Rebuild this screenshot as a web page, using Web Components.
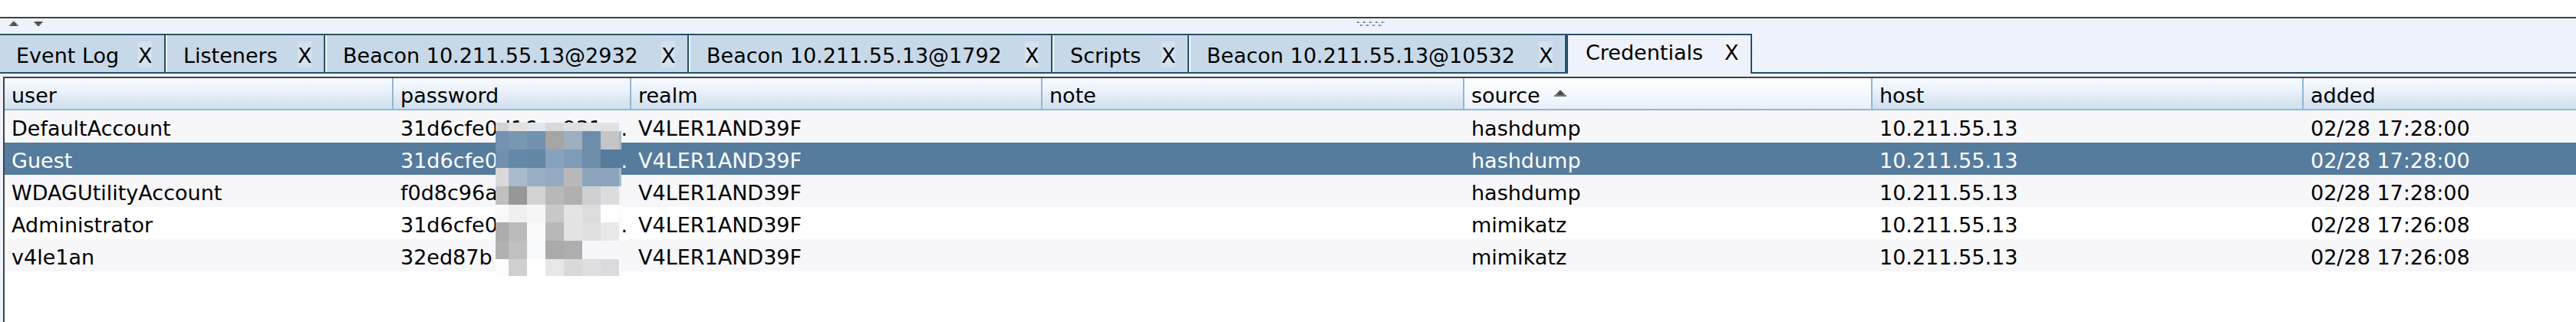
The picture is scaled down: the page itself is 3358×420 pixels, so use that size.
<!DOCTYPE html>
<html lang="en">
<head>
<meta charset="utf-8">
<title>Credentials</title>
<style>
  html, body { margin: 0; height: 100%; }
  body {
    font: 27px/36px "DejaVu Sans", "Noto Sans", sans-serif;
    color: #000;
    background: #fff;
    --panel: #eef2fb;
    --navy: #26506f;
    --edge: #404244;
    --sky: #8fb8d9;
  }
</style>
</head>
<body>
<app-workspace>
  <split-divider></split-divider>
  <tab-strip>
    <tab-item style="--w: 216px">Event Log</tab-item>
    <tab-item style="--w: 208px">Listeners</tab-item>
    <tab-item style="--w: 474px">Beacon 10.211.55.13@2932</tab-item>
    <tab-item style="--w: 474px">Beacon 10.211.55.13@1792</tab-item>
    <tab-item style="--w: 178px">Scripts</tab-item>
    <tab-item style="--w: 492px">Beacon 10.211.55.13@10532</tab-item>
    <tab-item style="--w: 242px" active>Credentials</tab-item>
  </tab-strip>
  <credential-table></credential-table>
</app-workspace>

<script>
const define = (name, html, setup) =>
  customElements.define(name, class extends HTMLElement {
    constructor() {
      super();
      const template = document.createElement('template');
      template.innerHTML = html;
      this.attachShadow({ mode: 'open' }).append(template.content.cloneNode(true));
    }
  });

define('app-workspace', `
  <style>
    :host { display: flex; flex-direction: column; min-height: 100vh; box-sizing: border-box; padding-top: 22px; overflow: hidden; }
    main { flex: 1; display: flex; flex-direction: column; border-top: 2px solid var(--edge); background: var(--panel); }
  </style>
  <main><slot></slot></main>`);

define('split-divider', `
  <style>
    :host { display: grid; grid-template-columns: 36px 1fr; align-items: start; height: 16px; padding: 4px 0 0 8px; }
    .arrows { display: flex; gap: 20px; padding-left: 4px; }
    button { flex: none; width: 12px; height: 6px; padding: 0; border: 0; background: none; display: block; }
    svg { display: block; flex: none; }
    .grip { justify-self: center; padding-left: 172px; }
  </style>
  <div class="arrows">
    <button aria-label="Collapse up"><svg width="12" height="6" fill="#505254"><path d="M4 0h4v2h2v2h2v2H0V4h2V2h2z" fill="#8b8d91"/><path d="M5 0h2v2h2v2h1v2H2V4h1V2h2z"/></svg></button>
    <button aria-label="Collapse down"><svg width="12" height="6" fill="#505254"><path d="M0 0h12v2h-2v2H8v2H4V4H2V2H0z" fill="#8b8d91"/><path d="M2 0h8v2H9v2H7v2H5V4H3V2H2z"/></svg></button>
  </div>
  <div class="grip"><svg width="36" height="6">
    <path d="M0 0h2v2H0zM8 0h2v2H8zM16 0h2v2h-2zM24 0h2v2h-2zM32 0h2v2h-2zM4 4h2v2H4zM12 4h2v2h-2zM20 4h2v2h-2zM28 4h2v2h-2z" fill="#5f8bb2"/>
    <path d="M2 0h2v2H2zM10 0h2v2h-2zM18 0h2v2h-2zM26 0h2v2h-2zM34 0h2v2h-2zM6 4h2v2H6zM14 4h2v2h-2zM22 4h2v2h-2zM30 4h2v2h-2z" fill="#b9c3cf"/>
  </svg></div>`);

define('tab-strip', `
  <style>
    :host { display: flex; height: 52px; }
    .rest { flex: 1; box-sizing: border-box; border-bottom: 2px solid var(--navy); }
  </style>
  <slot></slot><div class="rest"></div>`);

define('tab-item', `
  <style>
    :host {
      display: flex; justify-content: space-between; align-items: flex-start; box-sizing: border-box;
      flex: 0 0 var(--w); height: 52px; padding: 6px 16px 0 23px; background: #c7d9e9;
      border: solid var(--navy); border-width: 2px 2px 2px 0; box-shadow: inset 2px 0 #f1f6fb;
    }
    :host(:first-child) { box-shadow: none; padding-left: 21px; }
    :host([active]) {
      background: var(--panel); padding-top: 2px; border-width: 2px 2px 0 2px; box-shadow: none;
    }
    button { font: inherit; line-height: 42px; color: inherit; border: 0; padding: 0; margin: 0; background: none; white-space: nowrap; }
    .close { box-sizing: border-box; width: 18px; height: 34px; line-height: 30px; padding-top: 4px; margin-top: 2px; background: radial-gradient(#d5e3f2, #d6e1ec); }
    :host([active]) .close { background: #f1f4fa; }
  </style>
  <button role="tab"><slot></slot></button><button class="close">X</button>`);

const columns = [['user', 507], ['password', 310], ['realm', 536], ['note', 550], ['source', 532], ['host', 562], ['added', 0]];
const rows = [
  ['DefaultAccount', '31d6cfe0d16ae931...', 'hashdump', '02/28 17:28:00'],
  ['Guest', '31d6cfe0d16ae931...', 'hashdump', '02/28 17:28:00'],
  ['WDAGUtilityAccount', 'f0d8c96a', 'hashdump', '02/28 17:28:00'],
  ['Administrator', '31d6cfe0d16ae931...', 'mimikatz', '02/28 17:26:08'],
  ['v4le1an', '32ed87b', 'mimikatz', '02/28 17:26:08'],
];

/* Pixelated censor block: column edges, row edges, and one colour per cell. */
const xs = [0, 17, 41, 65, 89, 113, 137, 161, 164];
const ys = [0, 11, 35, 59, 83, 107, 130, 154, 178, 200];
const tones = [
  '#d2d3d5 #e2e2e1 #e1e6ef #d8d9db #dedfe2 #e2e3e7 #e1e1e4 #f7f7fa',
  '#7391b1 #7897b0 #7290b0 #a5a5a5 #9eafc0 #6e8dab #c5c5c7 #a9bace',
  '#7190b0 #6488a7 #6286a3 #87a2bc #7f9bb6 #6e8dab #557b9d #557b9d',
  '#dadada #a9bbcd #99adc5 #95abc3 #b9b9bb #8da4bd #8da3bc #a9bace',
  '#bfbfbf #979797 #d2d2d2 #b8b8b8 #b0b0b0 #cecfd1 #dcdcde #f4f4f7',
  '#f9f9f9 #efefef #f6f6f6 #c8c8c8 #e4e4e4 #dddddd #ffffff #fafafa',
  '#acacac #bababa #fafafa #b8b8b8 #e3e3e3 #e0e0e0 #e9e9e9 #fcfcfc',
  '#b1b1b1 #c0c0c0 #f8f9fc #aaaaaa #aeaeb0 #f7f7fa #f7f7fa #f7f7fa',
  '#fcfcfc #d0d0d0 #ffffff #e7e7e7 #d9d9d9 #dfdfe1 #dbdbdd #fbfbfc',
];
const mosaic = tones.map((line, r) => line.split(' ').map((fill, c) =>
  `<rect x="${xs[c]}" y="${ys[r]}" width="${xs[c + 1] - xs[c]}" height="${ys[r + 1] - ys[r]}" fill="${fill}"/>`).join('')).join('');

const td = (text) => `<td>${text}</td>`;
const secretText = (text) => text.endsWith('...')
  ? `<div class="secret"><span>${text.slice(0, -3)}</span><span>...</span></div>` : text;

define('credential-table', `
  <style>
    :host { display: block; flex: 1; margin: 4px 0 0 4px; border: solid var(--edge); border-width: 2px 0 0 2px; background: #fff; }
    table { width: 100%; table-layout: fixed; border-collapse: separate; border-spacing: 0; }
    th, td { box-sizing: border-box; height: 42px; text-align: left; font-weight: normal; white-space: nowrap; padding: 6px 9px 0; }
    th {
      line-height: 34px;
      border: solid var(--sky); border-width: 0 2px 2px 0;
      background: linear-gradient(#f8fbff, #ebf2fc 40%, #dae6f1 75%, #d0e1f0);
    }
    th:last-child { border-right: 0; }
    th[aria-sort] { background: linear-gradient(#fff, #f5f9fd 50%, #e8f0f8); }
    th svg { margin-left: 18px; vertical-align: 8px; }
    tr:nth-child(odd) td { background: #f7f7fa; }
    tr[aria-selected] td { background: #557b9d; color: #fff; }
    td:nth-child(2) { position: relative; padding-right: 5px; }
    .secret { display: flex; justify-content: space-between; }
    .mosaic { position: absolute; left: 133px; top: 16px; z-index: 1; }
  </style>
  <table>
    <colgroup>${columns.map(([, w]) => w ? `<col style="width:${w}px">` : '<col>').join('')}</colgroup>
    <thead><tr>${columns.map(([name]) => name === 'source'
      ? `<th scope="col" aria-sort="ascending">source<svg width="16" height="8"><path d="M6 0h4v2h2v2h2v2h2v2H0V6h2V4h2V2h2z" fill="#77797b"/><path d="M7 0h2v2h2v2h1v2H4V4h1V2h2z" fill="#48494b"/></svg></th>`
      : `<th scope="col">${name}</th>`).join('')}</tr></thead>
    <tbody>${rows.map(([user, secret, source, added], i) => `
      <tr${i === 1 ? ' aria-selected="true"' : ''}>${td(user)}<td>${secretText(secret)}${i === 0
        ? `<svg class="mosaic" width="164" height="200" shape-rendering="crispEdges" aria-hidden="true">${mosaic}</svg>` : ''}</td>${
        td('V4LER1AND39F') + td('') + td(source) + td('10.211.55.13') + td(added)}</tr>`).join('')}
    </tbody>
  </table>`);
</script>
</body>
</html>
